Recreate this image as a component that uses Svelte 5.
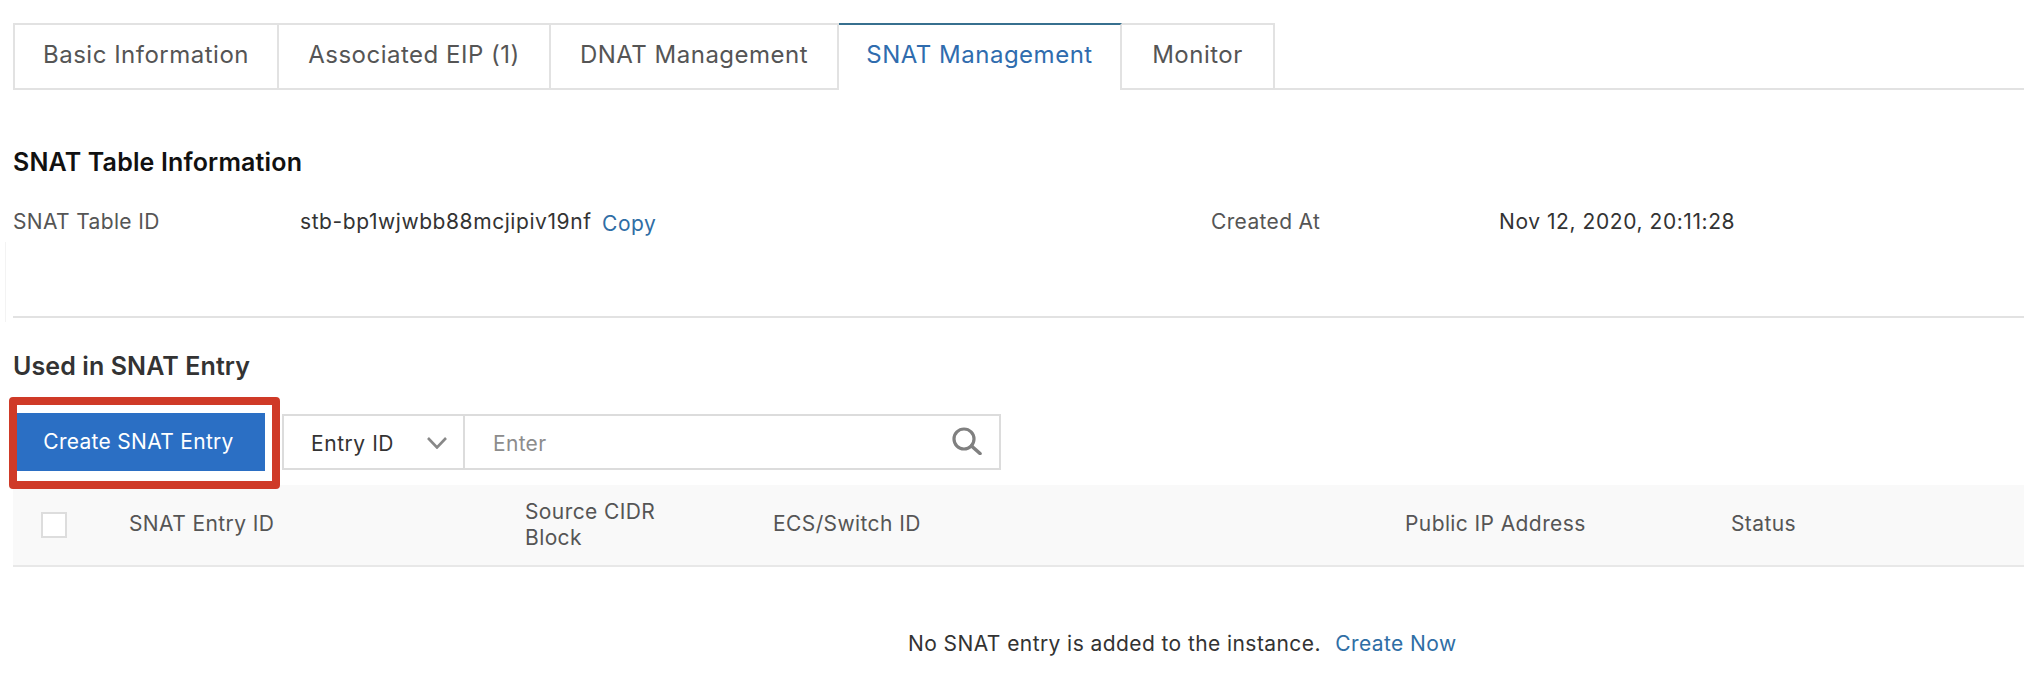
<script>
  const tabs = ['Basic Information', 'Associated EIP (1)', 'DNAT Management', 'SNAT Management', 'Monitor'];
  const activeTab = 'SNAT Management';
  const columns = ['SNAT Entry ID', 'Source CIDR Block', 'ECS/Switch ID', 'Public IP Address', 'Status'];
</script>

<div class="page">
  <span class="edge"></span>
  <nav class="tabs">
    {#each tabs as tab}
      <button class="tab" class:tab--active={tab === activeTab} type="button">{tab}</button>
    {/each}
  </nav>

  <section class="info">
    <h2 class="info__title">SNAT Table Information</h2>
    <div class="info__row">
      <span class="label">SNAT Table ID</span>
      <span class="value value--id">stb-bp1wjwbb88mcjipiv19nf <a class="link link--copy" href="#copy">Copy</a></span>
      <span class="label">Created At</span>
      <span class="value">Nov 12, 2020, 20:11:28</span>
    </div>
  </section>

  <section class="entries">
    <h2 class="entries__title">Used in SNAT Entry</h2>
    <div class="toolbar">
      <div class="toolbar__create">
        <button class="create" type="button">Create SNAT Entry</button>
        <span class="highlight"></span>
      </div>
      <div class="search">
        <div class="search__select">
          <span>Entry ID</span>
          <svg width="20" height="12" viewBox="0 0 20 12" fill="none" stroke="#888" stroke-width="2.6"><path d="M1 1l9 9.5L19 1" /></svg>
        </div>
        <div class="search__input">
          <span>Enter</span>
          <svg class="search__icon" width="30" height="28" viewBox="0 0 30 28" fill="none" stroke="#808080" stroke-width="3.2"><circle cx="12" cy="12" r="10" /><path d="M19.5 19l8.5 7.5" stroke-linecap="round" stroke-width="3.6" /></svg>
        </div>
      </div>
    </div>

    <div class="table__head">
      <span class="check"></span>
      {#each columns as column}
        <span class="table__cell">{column}</span>
      {/each}
    </div>
    <p class="empty">No SNAT entry is added to the instance. <a class="link link--create" href="#create">Create Now</a></p>
  </section>
</div>

<style>
  :global(body) {
    background: #fff;
    margin: 0;
  }

  .page {
    box-sizing: border-box;
    color: #333;
    font-family: Inter, "Liberation Sans", sans-serif;
    font-size: 21px;
    height: 694px;
    overflow: hidden;
    padding: 23px 0 0 13px;
    position: relative;
    width: 2024px;
  }

  .edge {
    border-right: 1px solid #f3f3f3;
    height: 80px;
    left: 0;
    position: absolute;
    top: 242px;
    width: 5px;
  }

  .tabs {
    border-bottom: 2px solid #e2e2e2;
    display: grid;
    grid-template-columns: 266px 272px 288px 283px 153px 1fr;
    height: 65px;
  }

  .tab {
    background: #fff;
    border: 2px solid #e2e2e2;
    border-bottom: 0;
    border-left-width: 0;
    color: #555;
    font: inherit;
    font-size: 24px;
    height: 65px;
    letter-spacing: 0.5px;
    padding: 0 0 4px;
  }

  .tab:first-child {
    border-left-width: 2px;
  }

  .tab--active {
    border-top-color: #37708f;
    color: #2f6cae;
    height: 67px;
    padding-bottom: 6px;
    position: relative;
  }

  .info {
    border-bottom: 2px solid #e2e2e2;
    height: 226px;
  }

  .info__title {
    color: #111;
    font-size: 25px;
    font-weight: 600;
    letter-spacing: 0.15px;
    line-height: 30px;
    margin: 0;
    padding-top: 57px;
  }

  .info__row {
    display: grid;
    grid-template-columns: 287px 911px 288px 1fr;
    line-height: 30px;
    margin-top: 30px;
  }

  .label {
    color: #555;
    letter-spacing: 0.35px;
  }

  .value {
    color: #333;
    letter-spacing: 0.57px;
  }

  .link {
    color: #2f6ea5;
    text-decoration: none;
  }

  .link--copy {
    margin-left: 4px;
    position: relative;
    top: 2px;
  }

  .entries__title {
    color: #333;
    font-size: 25px;
    font-weight: 600;
    letter-spacing: 0.1px;
    line-height: 30px;
    margin: 0;
    padding-top: 33px;
  }

  .toolbar {
    display: flex;
    margin-top: 33px;
    height: 56px;
  }

  .toolbar__create {
    margin-left: 4px;
    position: relative;
    width: 265px;
  }

  .create {
    background: #2b6fc4;
    border: 0;
    color: #fff;
    font: inherit;
    height: 58px;
    letter-spacing: 0.3px;
    margin-top: -1px;
    padding: 0 5px 2px 0;
    width: 248px;
  }

  .highlight {
    border: 8px solid #cf3a27;
    border-radius: 4px;
    box-sizing: border-box;
    height: 92px;
    left: -8px;
    position: absolute;
    top: -17px;
    width: 271px;
  }

  .search {
    border: 2px solid #dcdcdc;
    box-sizing: border-box;
    display: flex;
    height: 56px;
    margin-left: 0;
    width: 719px;
  }

  .search__select {
    align-items: center;
    border-right: 2px solid #dcdcdc;
    box-sizing: border-box;
    display: flex;
    justify-content: space-between;
    letter-spacing: 0.55px;
    padding: 2px 16px 0 27px;
    width: 181px;
  }

  .search__input {
    align-items: center;
    color: #8c8c8c;
    display: flex;
    flex: 1;
    justify-content: space-between;
    letter-spacing: 0.3px;
    padding: 2px 17px 0 28px;
  }

  .search__icon {
    margin-top: -4px;
  }

  .table__head {
    align-items: center;
    background: #f9f9f9;
    border-bottom: 2px solid #e8e8e8;
    color: #555;
    display: grid;
    grid-template-columns: 116px 396px 248px 632px 326px 1fr;
    height: 80px;
    letter-spacing: 0.4px;
    line-height: 26px;
    margin-top: 15px;
  }

  .table__cell {
    position: relative;
    top: -1px;
  }

  .check {
    background: #fff;
    border: 2px solid #ddd;
    box-sizing: border-box;
    height: 26px;
    margin-left: 28px;
    width: 26px;
  }

  .table__cell:nth-child(3) {
    top: 0;
    width: 150px;
  }

  .empty {
    color: #333;
    letter-spacing: 0.42px;
    line-height: 30px;
    margin: 62px 0 0 895px;
  }

  .link--create {
    margin-left: 8px;
  }
</style>
